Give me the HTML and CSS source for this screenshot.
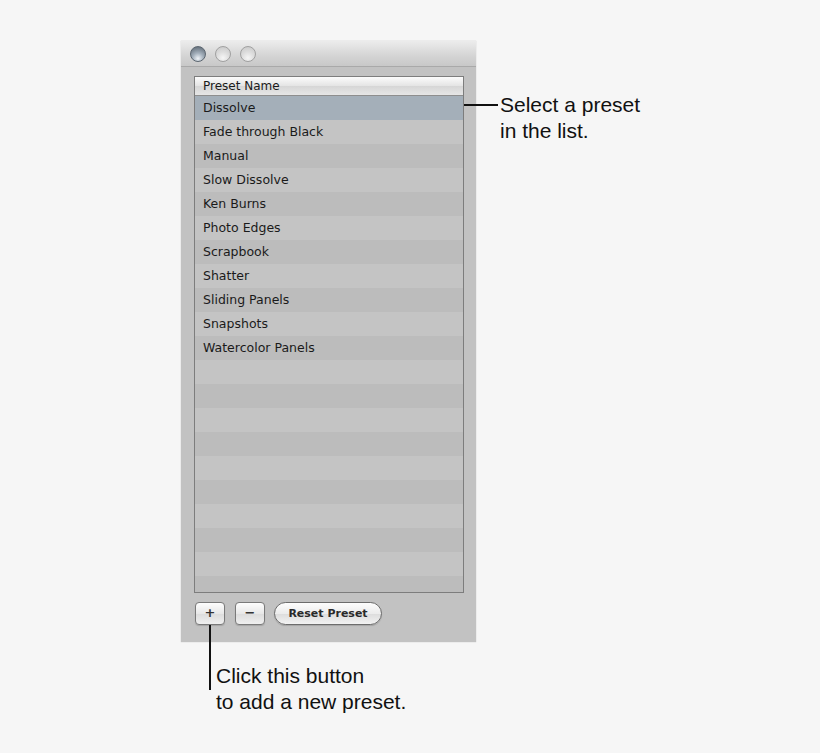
FILE: index.html
```html
<!DOCTYPE html>
<html>
<head>
<meta charset="utf-8">
<link rel="stylesheet" href="styles.css">
</head>
<body>
<div class="stage">
  <div class="window">
    <div class="titlebar">
      <span class="light active"></span>
      <span class="light"></span>
      <span class="light"></span>
    </div>
    <div class="content">
      <div class="table">
        <div class="header">Preset Name</div>
        <div class="rows">
          <div class="row selected">Dissolve</div>
          <div class="row">Fade through Black</div>
          <div class="row">Manual</div>
          <div class="row">Slow Dissolve</div>
          <div class="row">Ken Burns</div>
          <div class="row">Photo Edges</div>
          <div class="row">Scrapbook</div>
          <div class="row">Shatter</div>
          <div class="row">Sliding Panels</div>
          <div class="row">Snapshots</div>
          <div class="row">Watercolor Panels</div>
          <div class="row"></div>
          <div class="row"></div>
          <div class="row"></div>
          <div class="row"></div>
          <div class="row"></div>
          <div class="row"></div>
          <div class="row"></div>
          <div class="row"></div>
          <div class="row"></div>
          <div class="row"></div>
        </div>
      </div>
      <div class="buttons">
        <div class="sqbtn">+</div>
        <div class="sqbtn">−</div>
        <div class="pill">Reset Preset</div>
      </div>
    </div>
  </div>
  <div class="callout-right">
    <span class="hline"></span>
    <div class="ctext">Select a preset<br>in the list.</div>
  </div>
  <div class="callout-bottom">
    <span class="vline"></span>
    <div class="ctext">Click this button<br>to add a new preset.</div>
  </div>
</div>
</body>
</html>
```
FILE: styles.css
```css
html, body {
  margin: 0;
  padding: 0;
  background: #f6f6f6;
  width: 820px;
  height: 753px;
  overflow: hidden;
}
.stage {
  position: relative;
  width: 820px;
  height: 753px;
}
.window {
  position: absolute;
  left: 181px;
  top: 41px;
  width: 295px;
  height: 601px;
  background: #c2c2c2;
  box-shadow: 0 0 1px #bdbdbd;
  display: flex;
  flex-direction: column;
}
.titlebar {
  height: 25px;
  border-bottom: 1px solid #a9a9a9;
  background: linear-gradient(#ececec, #d4d4d4 60%, #c8c8c8);
  display: flex;
  align-items: center;
  gap: 9px;
  padding-left: 9px;
}
.light {
  width: 16px;
  height: 16px;
  border-radius: 50%;
  box-sizing: border-box;
  border: 1px solid #a0a0a0;
  background: radial-gradient(circle at 50% 78%, #f6f6f6 0%, #dedede 45%, #c6c6c6 100%);
}
.light.active {
  border-color: #5c6670;
  background: radial-gradient(circle at 50% 82%, #f0f4f8 0%, #a4b0bc 40%, #55606b 100%);
}
.content {
  padding: 9px 0 0 13px;
  display: flex;
  flex-direction: column;
}
.table {
  width: 270px;
  height: 517px;
  box-sizing: border-box;
  border: 1px solid #7d7d7d;
  background: #c4c4c4;
  overflow: hidden;
  font-family: "DejaVu Sans", sans-serif;
  font-size: 12.5px;
  color: #1a1a1a;
}
.header {
  height: 18px;
  line-height: 18px;
  padding-left: 8px;
  font-size: 12px;
  background: linear-gradient(#fbfbfb, #e4e4e4 50%, #d6d6d6 51%, #e6e6e6);
  border-bottom: 1px solid #8e8e8e;
}
.row {
  height: 24px;
  line-height: 24px;
  padding-left: 8px;
  background: #c4c4c4;
}
.row:nth-child(odd) {
  background: #bcbcbc;
}
.row.selected {
  background: #a4afb9;
}
.buttons {
  display: flex;
  align-items: center;
  gap: 10px;
  margin-top: 9px;
  margin-left: 1px;
}
.sqbtn {
  width: 30px;
  height: 23px;
  box-sizing: border-box;
  border: 1px solid #7a7a7a;
  border-radius: 4px;
  background: linear-gradient(#fdfdfd, #e8e8e8 50%, #dcdcdc 51%, #efefef);
  box-shadow: 0 1px 1px rgba(0,0,0,0.15);
  text-align: center;
  line-height: 20px;
  font-family: "DejaVu Sans", sans-serif;
  font-weight: bold;
  font-size: 13px;
  color: #333;
}
.pill {
  width: 108px;
  height: 23px;
  box-sizing: border-box;
  border: 1px solid #6c6c6c;
  border-radius: 12px;
  background: linear-gradient(#fdfdfd, #ececec 50%, #dcdcdc 51%, #f2f2f2);
  box-shadow: 0 1px 1px rgba(0,0,0,0.15);
  text-align: center;
  line-height: 21px;
  font-family: "DejaVu Sans", sans-serif;
  font-weight: bold;
  font-size: 11px;
  color: #2a2a2a;
  margin-left: -1px;
}
.ctext {
  font-family: "Liberation Sans", Arial, sans-serif;
  font-size: 21px;
  line-height: 26px;
  color: #111;
}
.callout-right {
  position: absolute;
  left: 464px;
  top: 92px;
  display: flex;
  align-items: flex-start;
}
.hline {
  width: 34px;
  height: 2px;
  background: #111;
  margin-top: 12px;
  margin-right: 2px;
}
.callout-bottom {
  position: absolute;
  left: 209px;
  top: 625px;
  display: flex;
  align-items: flex-start;
}
.vline {
  width: 2px;
  height: 65px;
  background: #111;
  margin-right: 5px;
}
.callout-bottom .ctext {
  margin-top: 38px;
}
```
